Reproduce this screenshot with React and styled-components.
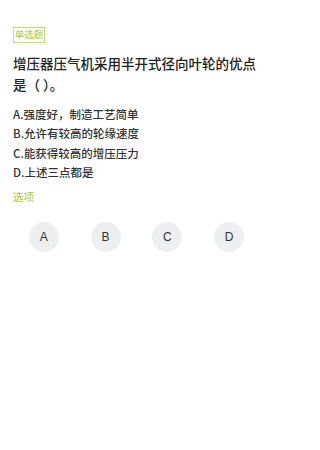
import styled, { createGlobalStyle } from "styled-components";

const GlobalStyle = createGlobalStyle`
  body {
    margin: 0;
    background: #ffffff;
    font-family: "Noto Sans CJK SC", "Liberation Sans", sans-serif;
  }
`;

const options = [
  { key: "A", text: "强度好，制造工艺简单" },
  { key: "B", text: "允许有较高的轮缘速度" },
  { key: "C", text: "能获得较高的增压压力" },
  { key: "D", text: "上述三点都是" },
];

const App = () => {
  return (
    <>
      <GlobalStyle />
      <Page>
        <Tag>单选题</Tag>
        <Question>增压器压气机采用半开式径向叶轮的优点是（ ）。</Question>
        <OptionList>
          {options.map((o) => (
            <Option key={o.key}>
              {o.key}.{o.text}
            </Option>
          ))}
        </OptionList>
        <SectionLabel>选项</SectionLabel>
        <Choices>
          {options.map((o) => (
            <Cell key={o.key}>
              <Circle>{o.key}</Circle>
            </Cell>
          ))}
        </Choices>
      </Page>
    </>
  );
};

const Page = styled.div`
  box-sizing: border-box;
  width: 270px;
  padding: 27px 10px 27px 13px;
`;

const Tag = styled.div`
  display: flex;
  align-items: center;
  justify-content: center;
  box-sizing: border-box;
  width: 32px;
  height: 16px;
  border: 1px solid #c9dc5e;
  color: #a9c52f;
  font-size: 9.5px;
  line-height: 1;
`;

const Question = styled.div`
  margin-top: 10px;
  font-size: 13.5px;
  line-height: 21px;
  font-weight: 500;
  color: #222222;
`;

const OptionList = styled.div`
  margin-top: 10px;
`;

const Option = styled.div`
  font-size: 11.5px;
  line-height: 19.4px;
  font-weight: 500;
  color: #333333;
`;

const SectionLabel = styled.div`
  margin-top: 7px;
  font-size: 10.5px;
  line-height: 14px;
  color: #a9c52f;
`;

const Choices = styled.div`
  display: grid;
  grid-template-columns: repeat(4, 1fr);
  margin-top: 18px;
`;

const Cell = styled.div`
  display: flex;
  justify-content: center;
`;

const Circle = styled.div`
  width: 30px;
  height: 30px;
  border-radius: 50%;
  background: #eeeff1;
  display: flex;
  align-items: center;
  justify-content: center;
  font-family: "Liberation Sans", sans-serif;
  font-size: 12px;
  color: #333333;
`;

export default App;
